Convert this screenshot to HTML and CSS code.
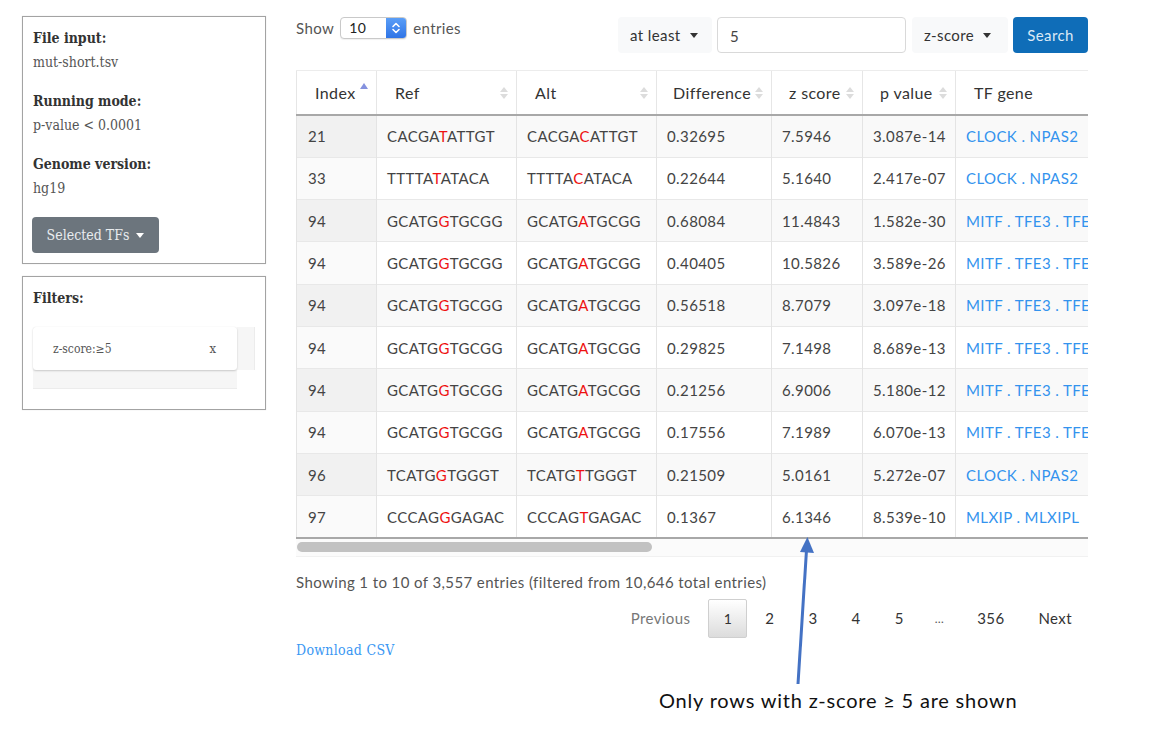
FILE: index.html
```html
<!DOCTYPE html>
<html>
<head>
<meta charset="utf-8">
<title>Results</title>
<link rel="stylesheet" href="styles.css">
</head>
<body>
<div class="page">
  <aside class="sidebar">
    <section class="panel info-panel">
      <div class="group">
        <div class="label">File input:</div>
        <div class="value">mut-short.tsv</div>
      </div>
      <div class="group">
        <div class="label">Running mode:</div>
        <div class="value">p-value &lt; 0.0001</div>
      </div>
      <div class="group">
        <div class="label">Genome version:</div>
        <div class="value">hg19</div>
      </div>
      <button class="btn-tfs">Selected TFs <span class="caret light"></span></button>
    </section>
    <section class="panel filter-panel">
      <div class="label">Filters:</div>
      <div class="chips">
        <div class="chip"><span>z-score:≥5</span><span class="chip-x">x</span></div>
        <div class="vtrack"></div>
        <div class="htrack"></div>
      </div>
    </section>
  </aside>

  <main class="main">
    <div class="toolbar">
      <div class="length">
        <span>Show</span>
        <span class="select"><span class="select-val">10</span><span class="stepper"><svg width="10" height="14" viewBox="0 0 10 14"><path d="M2 5.5 L5 2.5 L8 5.5 M2 8.5 L5 11.5 L8 8.5" fill="none" stroke="#fff" stroke-width="1.6" stroke-linecap="round" stroke-linejoin="round"/></svg></span></span>
        <span>entries</span>
      </div>
      <div class="search">
        <button class="dd">at least <span class="caret"></span></button>
        <div class="num">5</div>
        <button class="dd">z-score <span class="caret"></span></button>
        <button class="go">Search</button>
      </div>
    </div>

    <div class="table-wrap">
      <table class="grid">
        <thead>
          <tr>
            <th class="c-idx">Index<span class="sort asc"></span></th>
            <th class="c-seq">Ref<span class="sort both"></span></th>
            <th class="c-seq">Alt<span class="sort both"></span></th>
            <th class="c-diff">Difference<span class="sort both"></span></th>
            <th class="c-z">z score<span class="sort both"></span></th>
            <th class="c-p">p value<span class="sort both"></span></th>
            <th class="c-tf">TF gene</th>
          </tr>
        </thead>
        <tbody>
          <tr><td>21</td><td>CACGA<b>T</b>ATTGT</td><td>CACGA<b>C</b>ATTGT</td><td>0.32695</td><td>7.5946</td><td>3.087e-14</td><td><a>CLOCK . NPAS2</a></td></tr>
          <tr><td>33</td><td>TTTTA<b>T</b>ATACA</td><td>TTTTA<b>C</b>ATACA</td><td>0.22644</td><td>5.1640</td><td>2.417e-07</td><td><a>CLOCK . NPAS2</a></td></tr>
          <tr><td>94</td><td>GCATG<b>G</b>TGCGG</td><td>GCATG<b>A</b>TGCGG</td><td>0.68084</td><td>11.4843</td><td>1.582e-30</td><td><a>MITF . TFE3 . TFEB</a></td></tr>
          <tr><td>94</td><td>GCATG<b>G</b>TGCGG</td><td>GCATG<b>A</b>TGCGG</td><td>0.40405</td><td>10.5826</td><td>3.589e-26</td><td><a>MITF . TFE3 . TFEB</a></td></tr>
          <tr><td>94</td><td>GCATG<b>G</b>TGCGG</td><td>GCATG<b>A</b>TGCGG</td><td>0.56518</td><td>8.7079</td><td>3.097e-18</td><td><a>MITF . TFE3 . TFEB</a></td></tr>
          <tr><td>94</td><td>GCATG<b>G</b>TGCGG</td><td>GCATG<b>A</b>TGCGG</td><td>0.29825</td><td>7.1498</td><td>8.689e-13</td><td><a>MITF . TFE3 . TFEB</a></td></tr>
          <tr><td>94</td><td>GCATG<b>G</b>TGCGG</td><td>GCATG<b>A</b>TGCGG</td><td>0.21256</td><td>6.9006</td><td>5.180e-12</td><td><a>MITF . TFE3 . TFEB</a></td></tr>
          <tr><td>94</td><td>GCATG<b>G</b>TGCGG</td><td>GCATG<b>A</b>TGCGG</td><td>0.17556</td><td>7.1989</td><td>6.070e-13</td><td><a>MITF . TFE3 . TFEB</a></td></tr>
          <tr><td>96</td><td>TCATG<b>G</b>TGGGT</td><td>TCATG<b>T</b>TGGGT</td><td>0.21509</td><td>5.0161</td><td>5.272e-07</td><td><a>CLOCK . NPAS2</a></td></tr>
          <tr><td>97</td><td>CCCAG<b>G</b>GAGAC</td><td>CCCAG<b>T</b>GAGAC</td><td>0.1367</td><td>6.1346</td><td>8.539e-10</td><td><a>MLXIP . MLXIPL</a></td></tr>
        </tbody>
      </table>
    </div>
    <div class="scrollbar"><div class="thumb"></div></div>

    <div class="info">Showing 1 to 10 of 3,557 entries (filtered from 10,646 total entries)</div>
    <div class="paginate">
      <span class="pg disabled">Previous</span>
      <span class="pg current">1</span>
      <span class="pg">2</span>
      <span class="pg">3</span>
      <span class="pg">4</span>
      <span class="pg">5</span>
      <span class="ellipsis">…</span>
      <span class="pg">356</span>
      <span class="pg">Next</span>
    </div>
    <a class="download">Download CSV</a>
  </main>
</div>

<svg class="arrow" width="30" height="150" viewBox="0 0 30 150">
  <path d="M12 148 L20.5 14" stroke="#4472c4" stroke-width="3" fill="none"/>
  <path d="M21.4 1 L28 17 L14 16 Z" fill="#4472c4"/>
</svg>
<div class="annotation">Only rows with z-score ≥ 5 are shown</div>
</body>
</html>
```

FILE: styles.css
```css
* { box-sizing: border-box; }

html, body {
  margin: 0;
  padding: 0;
  background: #fff;
}

body {
  width: 1176px;
  height: 746px;
  overflow: hidden;
  position: relative;
  font-family: Lato, "Open Sans", sans-serif;
  color: #444;
}

.page {
  display: flex;
  align-items: flex-start;
  padding: 16px 0 0 22px;
}

/* ---------- sidebar ---------- */
.sidebar {
  width: 244px;
  display: flex;
  flex-direction: column;
  gap: 12px;
  font-family: "DejaVu Serif Condensed", "DejaVu Serif", serif;
  font-stretch: condensed;
  font-size: 14px;
  color: #444;
}

.panel {
  border: 1px solid #a3a3a3;
  box-shadow: 0 0 1px rgba(0,0,0,0.15);
}

.info-panel {
  padding: 9px 10px 10px 10px;
  height: 248px;
}

.group {
  margin-bottom: 15px;
}
.group:last-of-type { margin-bottom: 17px; }

.label {
  font-weight: bold;
  color: #333;
  line-height: 24px;
}

.value {
  line-height: 24px;
  color: #555;
}

.btn-tfs {
  margin-left: -1px;
  width: 127px;
  height: 36px;
  border: none;
  border-radius: 4px;
  background: #6c757d;
  color: #e9ecef;
  font-family: inherit;
  font-stretch: condensed;
  font-size: 14px;
  display: flex;
  align-items: center;
  justify-content: center;
  gap: 7px;
  padding: 0;
}

.caret {
  display: inline-block;
  width: 0;
  height: 0;
  border-left: 4px solid transparent;
  border-right: 4px solid transparent;
  border-top: 5px solid #333;
}
.caret.light { border-top-color: #fff; }

.filter-panel {
  height: 134px;
  padding: 9px 10px 0 10px;
}

.chips {
  margin-top: 17px;
  display: grid;
  grid-template-columns: 204px 18px;
  grid-template-rows: 43px 19px;
}

.chip {
  background: #fff;
  border-radius: 3px;
  box-shadow: 0 1px 2px rgba(0,0,0,0.18), 0 0 1px rgba(0,0,0,0.1);
  display: flex;
  align-items: center;
  justify-content: space-between;
  padding: 0 21px 0 20px;
  font-size: 12px;
  color: #555;
  position: relative;
  z-index: 1;
}

.chip-x {
  font-size: 13px;
  color: #555;
}

.vtrack {
  background: #f6f6f6;
  border-right: 1px solid #ececec;
}

.htrack {
  background: #f6f6f6;
  border-bottom: 1px solid #ececec;
}

/* ---------- main ---------- */
.main {
  margin-left: 30px;
  width: 792px;
  margin-top: 1px;
  letter-spacing: 0.4px;
}

.toolbar {
  display: flex;
  justify-content: space-between;
  align-items: flex-start;
  height: 36px;
}

.length {
  display: flex;
  align-items: center;
  gap: 5px;
  font-size: 15px;
  color: #555;
  height: 22px;
}

.select {
  display: inline-flex;
  width: 67px;
  height: 22px;
  border: 1px solid #c9c9c9;
  border-radius: 4px;
  overflow: hidden;
  background: #fff;
  justify-content: space-between;
  align-items: stretch;
  margin: 0 1px;
  box-shadow: 0 1px 1px rgba(0,0,0,0.06);
}

.select-val {
  padding-left: 8px;
  line-height: 20px;
  font-size: 14px;
  color: #222;
}

.stepper {
  width: 20px;
  background: linear-gradient(#5a9ef7, #2f74e6);
  display: flex;
  align-items: center;
  justify-content: center;
}

.search {
  display: flex;
  gap: 5px;
}

.dd {
  height: 36px;
  border: none;
  border-radius: 4px;
  background: #f8f9fa;
  font-family: inherit;
  font-size: 15px;
  letter-spacing: 0.4px;
  color: #333;
  display: flex;
  align-items: center;
  gap: 9px;
  padding: 0 12px;
}

.dd:first-child { width: 94px; }
.dd:nth-child(3) { width: 96px; margin-left: 1px; }

.num {
  width: 189px;
  height: 36px;
  border: 1px solid #d9d9d9;
  border-radius: 4px;
  padding: 0 12px;
  line-height: 36px;
  font-size: 15px;
  color: #444;
}

.go {
  width: 75px;
  height: 36px;
  border: none;
  border-radius: 4px;
  background: #0f6db8;
  color: #dce9f6;
  font-family: inherit;
  font-size: 15px;
  letter-spacing: 0.4px;
  padding: 0;
}

/* ---------- table ---------- */
.table-wrap {
  margin-top: 17px;
  width: 792px;
  overflow: hidden;
  border-top: 1px solid #ececec;
}

.grid {
  border-collapse: collapse;
  table-layout: fixed;
  width: 900px;
  font-size: 15px;
}

.grid th {
  position: relative;
  height: 44px;
  text-align: left;
  font-weight: normal;
  font-size: 16px;
  color: #333;
  padding: 0 20px 0 18px;
  border-left: 1px solid #e6e6e6;
  border-bottom: 2px solid #a8a8a8;
  white-space: nowrap;
}

.c-idx { width: 80px; }
.c-seq { width: 140px; }
.c-diff { width: 115px; }
.c-z { width: 91px; }
.c-p { width: 93px; }
.c-tf { width: 241px; }

.grid th.c-diff { padding-left: 16px; }
.grid th.c-z { padding-left: 17px; }
.grid th.c-p { padding-left: 17px; }

.sort {
  position: absolute;
  right: 8px;
  top: 50%;
  width: 8px;
  height: 14px;
  margin-top: -7px;
}
.sort::before, .sort::after {
  content: "";
  position: absolute;
  left: 0;
  border-left: 4px solid transparent;
  border-right: 4px solid transparent;
}
.sort.both::before {
  top: 1px;
  border-bottom: 5px solid #dcdcdc;
}
.sort.both::after {
  bottom: 1px;
  border-top: 5px solid #dcdcdc;
}
.sort.asc {
  margin-top: -11px;
}
.sort.asc::before {
  top: 1px;
  border-bottom: 6px solid #8592df;
}

.grid td {
  height: 42.3px;
  padding: 0 10px;
  color: #444;
  border-left: 1px solid #e4e4e4;
  border-top: 1px solid #e8e8e8;
  white-space: nowrap;
  overflow: hidden;
}

.grid td:first-child { padding-left: 11px; }

.grid tbody tr:nth-child(odd) td { background: #f9f9f9; }
.grid tbody tr:nth-child(odd) td:first-child { background: #f1f1f1; }
.grid tbody tr:nth-child(even) td:first-child { background: #fafafa; }

.grid tbody tr:first-child td { border-top: none; }
.grid tbody tr:last-child td { border-bottom: 2px solid #a8a8a8; }

.grid td b {
  font-weight: normal;
  color: #ee1111;
}

.grid td a {
  color: #3393ee;
}

.scrollbar {
  height: 18px;
  background: #fbfbfb;
  border-bottom: 1px solid #f1f1f1;
  padding: 3px 0 0 1px;
}

.thumb {
  width: 355px;
  height: 10px;
  border-radius: 5px;
  background: #c2c2c2;
}

.info {
  margin-top: 14px;
  line-height: 22px;
  font-size: 15px;
  color: #555;
}

.paginate {
  margin-top: 6px;
  display: flex;
  justify-content: flex-end;
  align-items: center;
  font-size: 15px;
  color: #333;
}

.pg {
  padding: 8px 15px;
  line-height: 21px;
  border: 1px solid transparent;
  border-radius: 2px;
  margin-left: 2px;
  min-width: 39px;
  text-align: center;
}

.pg.disabled {
  color: #777;
}

.pg.current {
  border-color: #cfcfcf;
  background: linear-gradient(#fff, #dcdcdc);
  font-size: 14px;
  letter-spacing: 0;
  padding: 8px 14px;
}

.ellipsis {
  padding: 0 15px;
  color: #555;
  font-size: 12px;
}

.download {
  display: block;
  margin-top: 1px;
  line-height: 22px;
  font-family: "DejaVu Serif Condensed", "DejaVu Serif", serif;
  font-stretch: condensed;
  font-size: 14px;
  letter-spacing: 0.3px;
  color: #3a97f3;
}

/* ---------- annotation overlay ---------- */
.arrow {
  position: absolute;
  left: 786px;
  top: 536px;
}

.annotation {
  position: absolute;
  left: 659px;
  top: 686px;
  font-family: Lato, "Open Sans", sans-serif;
  font-size: 20px;
  letter-spacing: 0.8px;
  line-height: 28px;
  color: #111;
}
```
